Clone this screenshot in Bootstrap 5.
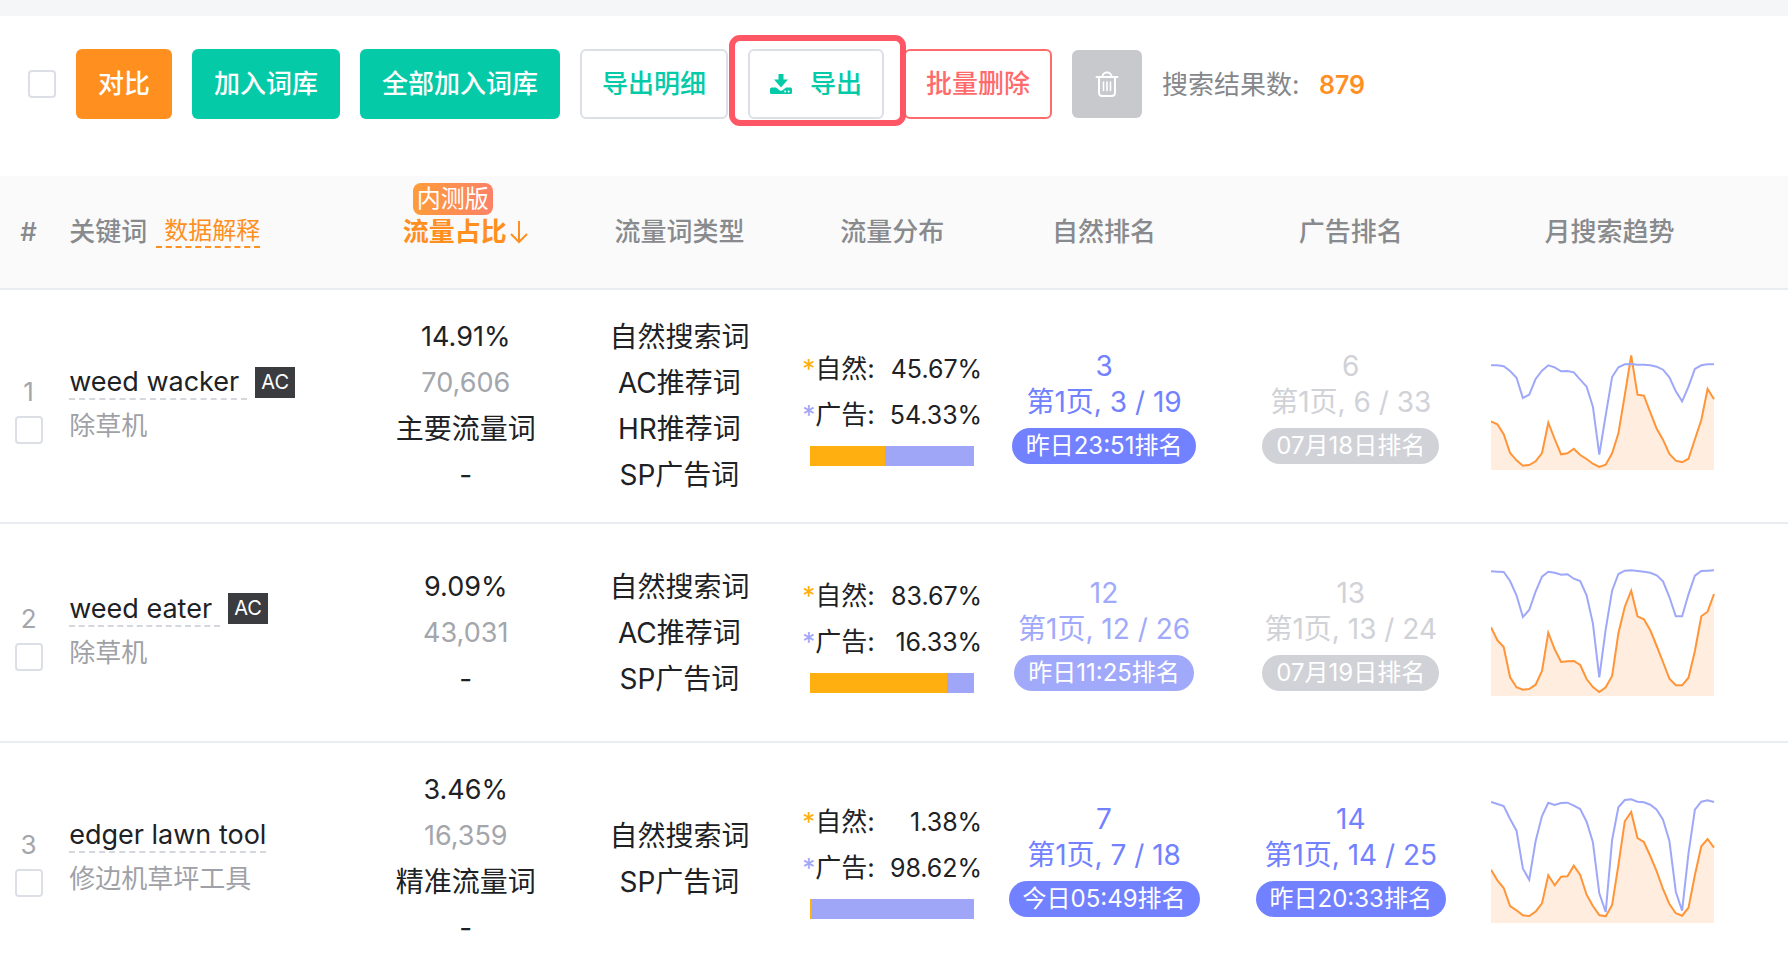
<!DOCTYPE html>
<html lang="zh-CN">
<head>
<meta charset="utf-8">
<meta name="viewport" content="width=device-width, initial-scale=1">
<title>关键词流量</title>
<link href="https://cdn.jsdelivr.net/npm/bootstrap@5.3.0/dist/css/bootstrap.min.css" rel="stylesheet">
<style>
  :root { --or: #ff8f1f; --gr: #05caa8; --pu: #7281ff; --lp: #9fa6f8; --line: #e9edf1; --mute: #a3a6ab; }
  body { font-family: Inter, "Noto Sans CJK SC", sans-serif; font-size: 28px; line-height: 46px; color: #202124; background: #fff; }
  .topband { height: 16px; background: #f5f6f8; }
  .toolbar { height: 160px; padding: 33px 28px 0; font-size: 26px; }
  .toolrow { height: 70px; gap: 20px; }
  .tick { width: 28px; height: 28px; margin: 0; border: 2px solid #dcdfe6; border-radius: 4px !important; flex: none; display: block; }
  .act { height: 70px; padding: 0 20px; font-size: 26px; font-weight: 500; line-height: 40px; border: 2px solid transparent; border-radius: 6px; white-space: nowrap; color: #fff; }
  .act-or { background: var(--or); } .act-gr { background: var(--gr); }
  .act-line { background: #fff; border-color: #dcdfe6; color: var(--gr); }
  .act-line svg { margin-right: 18px; }
  .act-del { background: #fff; border-color: #ff6b6b; color: #ff6b6b; }
  .act-bin { width: 70px; height: 68px; background: #c8c9cc; }
  .act:hover { filter: brightness(.96); }
  .frame { position: absolute; inset: -14px -22px -7px -19px; border: 6px solid #ff5666; border-radius: 11px; pointer-events: none; z-index: 2; }
  .count { font-size: 26px; color: #85878b; padding-top: 2px; }
  .count b { color: var(--or); font-size: 25px; font-weight: 600; margin-left: 12px; }
  .grid-t { table-layout: fixed; width: 100%; margin: 0; border-collapse: separate; border-spacing: 0; }
  .grid-t th { height: 114px; padding: 0; background: #fafafa; border-bottom: 2px solid var(--line); font-size: 26px; font-weight: 500; color: #888a8d; text-align: center; vertical-align: middle; }
  .grid-t td { padding: 24px 0; border-bottom: 2px solid var(--line); text-align: center; vertical-align: middle; }
  .grid-t .kw { text-align: left; padding-left: 12px; }
  .grid-t th.trend { padding-right: 60px; }
  .grid-t td.trend { text-align: left; }
  .trend svg { display: block; width: 224px; height: 169px; }
  .explain { font-size: 24px; font-weight: 400; color: var(--or); text-decoration: none; line-height: 30px; display: inline-block; padding-left: 8px; margin-left: 9px; border-bottom: 2px dashed var(--or); }
  .beta { position: absolute; left: 10px; bottom: 40px; height: 32px; padding: 0 4px; line-height: 32px; font-size: 24px; font-weight: 400; color: #fff; border-radius: 8px; background: linear-gradient(90deg, #ff9c38, #fc8168); }
  .sorted { position: relative; color: var(--or); font-weight: 600; }
  .idx { font-size: 26px; line-height: 48px; color: var(--mute); }
  .kwbox { padding-bottom: 4px; }
  .term { font-size: 27px; color: #202124; text-decoration: none; height: 36px; line-height: 36px; border-bottom: 2px dashed #d4d7dc; }
  .tag { height: 31px; line-height: 31px; width: 40px; font-size: 20px; color: #fff; background: #3a3c3f; text-align: center; }
  .zh { font-size: 26px; line-height: 36px; margin-top: 8px; color: #9fa1a6; }
  .num { font-size: 27px; }
  .soft { color: var(--mute); }
  .dist { width: 180px; font-size: 26px; }
  .pct { font-size: 25px; }
  .star-a { color: #ffaf0f; } .star-b { color: var(--lp); }
  .split { width: 164px; height: 20px; margin: 8px auto 0; border-radius: 0; background: var(--lp); }
  .split .progress-bar { background: #ffaf0f; }
  .rank { line-height: 36px; color: var(--pu); }
  .pill { display: inline-block; height: 36px; line-height: 36px; font-size: 24px; padding: 0 14px; margin-top: 8px; border-radius: 18px; color: #fff; background: var(--pu); vertical-align: top; }
  .rank.pale { color: #a1a9fb; } .rank.pale .pill { background: #a1a9fb; }
  .rank.off { color: #d0d2d7; } .rank.off .pill { background: #d0d2d7; }
</style>
</head>
<body>
<div class="topband"></div>
<div class="toolbar">
  <div class="toolrow d-flex align-items-center">
    <input class="form-check-input tick" type="checkbox" aria-label="全选">
    <button type="button" class="btn act act-or">对比</button>
    <button type="button" class="btn act act-gr">加入词库</button>
    <button type="button" class="btn act act-gr">全部加入词库</button>
    <button type="button" class="btn act act-line">导出明细</button>
    <div class="position-relative">
      <button type="button" class="btn act act-line d-flex align-items-center">
        <svg width="22" height="20" viewBox="0 0 22 20" fill="currentColor" aria-hidden="true"><path d="M8.500 0h5v5.500H18L11 13.500 4 5.500h4.500z"/><path fill-rule="evenodd" d="M1.500 13.500H6l3.800 3q1.200.9 2.400 0l3.800-3h4.500q1.500 0 1.500 1.500v3.500q0 1.500-1.500 1.500h-19Q0 20 0 18.500V15q0-1.500 1.500-1.500zM15.200 16.600a.9.900 0 1 0 .01 0zM18.700 16.600a.9.900 0 1 0 .01 0z"/></svg>
        <span>导出</span>
      </button>
      <span class="frame"></span>
    </div>
    <button type="button" class="btn act act-del">批量删除</button>
    <button type="button" class="btn act act-bin d-flex align-items-center justify-content-center" aria-label="删除">
      <svg width="24" height="28" viewBox="0 0 24 28" fill="none" stroke="currentColor" stroke-width="2" stroke-linecap="round" aria-hidden="true"><path d="M1.500 7h21M7.500 6.500a4.500 4 0 0 1 9 0M4 7v15.500q0 3.500 3.500 3.500h9q3.500 0 3.500-3.500V7"/><path stroke-width="1.600" d="M8.500 12v8.500M12 12v8.500M15.500 12v8.500"/></svg>
    </button>
    <div class="count">搜索结果数: <b>879</b></div>
  </div>
</div>

<table class="grid-t">
  <colgroup>
    <col style="width:3.2%"><col style="width:16.9%"><col style="width:11.9%"><col style="width:12%"><col style="width:11.8%"><col style="width:11.9%"><col style="width:15.7%"><col style="width:16.6%">
  </colgroup>
  <thead>
    <tr>
      <th>#</th>
      <th class="kw"><div class="d-flex align-items-center">关键词<a href="#" class="explain">数据解释</a></div></th>
      <th><span class="sorted d-inline-flex align-items-center"><span class="beta">内测版</span>流量占比<svg width="22" height="24" viewBox="0 0 22 24" fill="none" stroke="currentColor" stroke-width="2" aria-hidden="true"><path d="M12 1v21M4 14l8 8 8-8"/></svg></span></th>
      <th>流量词类型</th>
      <th>流量分布</th>
      <th>自然排名</th>
      <th>广告排名</th>
      <th class="trend">月搜索趋势</th>
    </tr>
  </thead>
  <tbody>
    <tr>
      <td><div class="idx">1</div><input class="form-check-input tick mx-auto float-none" type="checkbox" aria-label="选择 weed wacker"></td>
      <td class="kw"><div class="kwbox"><div class="d-flex align-items-center"><a href="#" class="term pe-2">weed wacker</a><span class="tag ms-2">AC</span></div><div class="zh">除草机</div></div></td>
      <td><div class="num">14.91%</div><div class="num soft">70,606</div><div>主要流量词</div><div>-</div></td>
      <td><div>自然搜索词</div><div>AC推荐词</div><div>HR推荐词</div><div>SP广告词</div></td>
      <td><div class="dist mx-auto"><div class="d-flex justify-content-between"><span><span class="star-a">*</span>自然:</span><span class="pct">45.67%</span></div><div class="d-flex justify-content-between"><span><span class="star-b">*</span>广告:</span><span class="pct">54.33%</span></div><div class="progress split"><div class="progress-bar" style="width:45.67%"></div></div></div></td>
      <td><div class="rank"><div>3</div><div>第1页, 3 / 19</div><span class="pill">昨日23:51排名</span></div></td>
      <td><div class="rank off"><div>6</div><div>第1页, 6 / 33</div><span class="pill">07月18日排名</span></div></td>
      <td class="trend"><svg role="img" aria-label="月搜索趋势" data-base="540" data-rank="226,226,229,243,263,324,314,267,242,226,232,244,243,247,269,290,350,494,376,261,232,223,222,224,224,226,230,239,262,304,334,290,237,226,223,223" data-volume="394,403,433,489,511,527,525,514,489,398,447,493,490,476,495,507,521,531,524,490,430,315,196,314,317,367,416,449,492,512,517,506,448,390,297,328"></svg></td>
    </tr>
    <tr>
      <td><div class="idx">2</div><input class="form-check-input tick mx-auto float-none" type="checkbox" aria-label="选择 weed eater"></td>
      <td class="kw"><div class="kwbox"><div class="d-flex align-items-center"><a href="#" class="term pe-2">weed eater</a><span class="tag ms-2">AC</span></div><div class="zh">除草机</div></div></td>
      <td><div class="num">9.09%</div><div class="num soft">43,031</div><div>-</div></td>
      <td><div>自然搜索词</div><div>AC推荐词</div><div>SP广告词</div></td>
      <td><div class="dist mx-auto"><div class="d-flex justify-content-between"><span><span class="star-a">*</span>自然:</span><span class="pct">83.67%</span></div><div class="d-flex justify-content-between"><span><span class="star-b">*</span>广告:</span><span class="pct">16.33%</span></div><div class="progress split"><div class="progress-bar" style="width:83.67%"></div></div></div></td>
      <td><div class="rank pale"><div>12</div><div>第1页, 12 / 26</div><span class="pill">昨日11:25排名</span></div></td>
      <td><div class="rank off"><div>13</div><div>第1页, 13 / 24</div><span class="pill">07月19日排名</span></div></td>
      <td class="trend"><svg role="img" aria-label="月搜索趋势" data-base="470" data-rank="96,97,98,125,168,233,212,157,112,97,100,106,105,118,125,168,252,414,270,154,104,94,93,95,97,100,108,126,173,231,231,165,109,95,94,93" data-volume="264,303,323,414,444,451,449,436,395,280,330,368,366,365,377,419,443,458,444,410,282,202,154,231,240,273,320,368,418,438,438,415,335,231,217,164"></svg></td>
    </tr>
    <tr>
      <td><div class="idx">3</div><input class="form-check-input tick mx-auto float-none" type="checkbox" aria-label="选择 edger lawn tool"></td>
      <td class="kw"><div class="kwbox"><div class="d-flex align-items-center"><a href="#" class="term">edger lawn tool</a></div><div class="zh">修边机草坪工具</div></div></td>
      <td><div class="num">3.46%</div><div class="num soft">16,359</div><div>精准流量词</div><div>-</div></td>
      <td><div>自然搜索词</div><div>SP广告词</div></td>
      <td><div class="dist mx-auto"><div class="d-flex justify-content-between"><span><span class="star-a">*</span>自然:</span><span class="pct">1.38%</span></div><div class="d-flex justify-content-between"><span><span class="star-b">*</span>广告:</span><span class="pct">98.62%</span></div><div class="progress split"><div class="progress-bar" style="width:1.38%"></div></div></div></td>
      <td><div class="rank"><div>7</div><div>第1页, 7 / 18</div><span class="pill">今日05:49排名</span></div></td>
      <td><div class="rank"><div>14</div><div>第1页, 14 / 25</div><span class="pill">昨日20:33排名</span></div></td>
      <td class="trend"><svg role="img" aria-label="月搜索趋势" data-base="459" data-rank="96,102,108,147,182,296,329,214,138,98,105,99,98,107,117,155,217,370,426,210,112,90,88,95,97,104,119,149,213,365,422,250,119,95,91,96" data-volume="299,331,354,408,421,436,438,425,400,316,346,320,319,287,315,374,408,435,439,405,285,154,126,204,216,258,304,357,402,430,437,413,315,229,207,233"></svg></td>
    </tr>
  </tbody>
</table>
<script src="https://cdn.jsdelivr.net/npm/bootstrap@5.3.0/dist/js/bootstrap.bundle.min.js"></script>
<script>
  // Sparklines: filled search volume with the rank line over it, 36 months each.
  const W = 223, FLOOR = 148;
  document.querySelectorAll('.trend svg').forEach(svg => {
    const base = +svg.dataset.base;
    const pts = s => s.split(',').map((v, i, a) => (i * W / (a.length - 1)).toFixed(1) + ',' + (FLOOR - (base - v) / 3).toFixed(1)).join(' ');
    const vol = pts(svg.dataset.volume), rank = pts(svg.dataset.rank);
    svg.innerHTML = `<polygon points="0,${FLOOR} ${vol} ${W},${FLOOR}" fill="#ffeddf"/>` +
      `<polyline points="${vol}" fill="none" stroke="#ff9538" stroke-width="2"/>` +
      `<polyline points="${rank}" fill="none" stroke="#9fa8f8" stroke-width="2"/>`;
  });
</script>
</body>
</html>
